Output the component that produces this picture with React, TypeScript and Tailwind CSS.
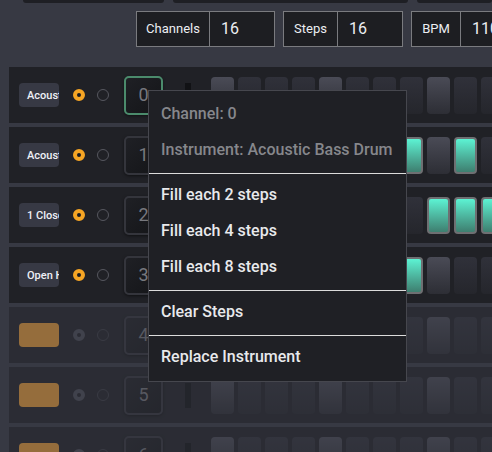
import React from "react";

type Row = { name: string; active: number[]; disabled?: boolean; selected?: boolean };

const rows: Row[] = [
  { name: "Acoustic Bass Drum", active: [], selected: true },
  { name: "Acoustic Snare", active: [7, 9] },
  { name: "1 Closed Hi-Hat", active: [8, 9, 10] },
  { name: "Open Hi-Hat", active: [7] },
  { name: "", active: [], disabled: true },
  { name: "", active: [], disabled: true },
  { name: "", active: [], disabled: true },
];

function Step({ on, accent }: { on: boolean; accent: boolean }) {
  if (on) {
    return (
      <div className="w-[23px] h-[37px] shrink-0 rounded-[4px] border-2 border-[#6e6f72] bg-gradient-to-b from-[#5cf3d3] to-[#3e7f70]" />
    );
  }
  return (
    <div
      className={
        accent
          ? "w-[23px] h-[37px] shrink-0 rounded-[4px] bg-gradient-to-b from-[#4a4b56] to-[#2d2e35]"
          : "w-[23px] h-[37px] shrink-0 rounded-[4px] bg-gradient-to-b from-[#30313a] to-[#25262c]"
      }
    />
  );
}

function ChannelRow({ row, idx }: { row: Row; idx: number }) {
  return (
    <div
      className={
        "h-[56px] bg-[#202126] flex items-center pl-[10px] " + (row.disabled ? "opacity-50" : "")
      }
    >
      {row.disabled ? (
        <div className="w-[40px] h-[24px] rounded-[4px] bg-[#f2a236] shrink-0" />
      ) : (
        <div className="w-[40px] h-[24px] rounded-[4px] bg-[#373944] shrink-0 overflow-hidden pl-[8px] flex items-center">
          <span className="text-[11px] font-medium text-[#eef0f6] whitespace-nowrap leading-none">
            {row.name}
          </span>
        </div>
      )}
      <div
        className={
          "ml-[14px] w-[12px] h-[12px] rounded-full shrink-0 border-[4px] " +
          (row.disabled ? "border-[#4a4b55] bg-[#202126]" : "border-[#f5a524] bg-[#1c1c1f]")
        }
      />
      <div
        className={
          "ml-[12px] w-[12px] h-[12px] rounded-full shrink-0 border " +
          (row.disabled ? "border-[#3c3d45]" : "border-[#56575f]")
        }
      />
      <div
        className={
          "ml-[15px] w-[39px] h-[39px] shrink-0 rounded-[5px] border-2 flex items-center justify-center bg-gradient-to-br from-[#1f2025] to-[#141518] shadow-[0_1px_3px_rgba(0,0,0,0.5)] " +
          (row.selected ? "border-[#4b8b6c]" : "border-[#34353c]")
        }
      >
        <span className="text-[18px] text-[#77787e] leading-none">{idx}</span>
      </div>
      <div className="ml-[22px] w-[6px] h-[25px] bg-[#111215] shrink-0" />
      <div className="ml-[20px] flex gap-[4px]">
        {Array.from({ length: 16 }).map((_, i) => (
          <Step key={i} on={row.active.includes(i)} accent={i % 4 === 0} />
        ))}
      </div>
    </div>
  );
}

function Field({ label, value, labelW, w }: { label: string; value: string; labelW: string; w: string }) {
  return (
    <div className={"h-[36px] flex border border-[#7a7b7f] bg-[#1d1e22] shrink-0 " + w}>
      <div className={"h-full flex items-center justify-center border-r border-[#7a7b7f] text-[13px] text-[#eceef2] " + labelW}>
        {label}
      </div>
      <div className="flex-1 flex items-center pl-[11px] text-[16px] text-[#eceef2]">{value}</div>
    </div>
  );
}

function MenuSep() {
  return <div className="h-px bg-[#dcdcdc] mt-[5px] mb-[3px]" />;
}

function MenuItem({ children, dim }: { children: React.ReactNode; dim?: boolean }) {
  return (
    <div
      className={
        "h-[36px] flex items-center pl-[12px] text-[16px] font-medium whitespace-nowrap " +
        (dim ? "text-[#86878c]" : "text-[#e8e9ec]")
      }
    >
      {children}
    </div>
  );
}

export default function App() {
  return (
    <div
      className="relative w-[492px] h-[452px] overflow-hidden bg-[#373943]"
      style={{ fontFamily: "Roboto, 'Liberation Sans', sans-serif" }}
    >
      <div className="flex gap-[9px] pl-[23px]">
        <div className="w-[149px] h-[3px] bg-[#1e1f24] rounded-b-[3px]" />
        <div className="w-[249px] h-[3px] bg-[#1e1f24] rounded-b-[3px]" />
        <div className="w-[80px] h-[3px] bg-[#1e1f24] rounded-b-[3px]" />
      </div>
      <div className="flex gap-[8px] pl-[136px] mt-[8px]">
        <Field label="Channels" value="16" labelW="w-[73px]" w="w-[139px]" />
        <Field label="Steps" value="16" labelW="w-[54px]" w="w-[120px]" />
        <Field label="BPM" value="110" labelW="w-[49px]" w="w-[110px]" />
      </div>
      <div className="mt-[20px] pl-[9px] flex flex-col gap-[4px]">
        {rows.map((r, i) => (
          <ChannelRow key={i} row={r} idx={i} />
        ))}
      </div>

      <div className="absolute left-[148px] top-[90px] w-[259px] h-[292px] bg-[#1f2025] border border-[#46474e] pt-[5px]">
        <MenuItem dim>Channel: 0</MenuItem>
        <MenuItem dim>Instrument: Acoustic Bass Drum</MenuItem>
        <MenuSep />
        <MenuItem>Fill each 2 steps</MenuItem>
        <MenuItem>Fill each 4 steps</MenuItem>
        <MenuItem>Fill each 8 steps</MenuItem>
        <MenuSep />
        <MenuItem>Clear Steps</MenuItem>
        <MenuSep />
        <MenuItem>Replace Instrument</MenuItem>
      </div>
    </div>
  );
}
